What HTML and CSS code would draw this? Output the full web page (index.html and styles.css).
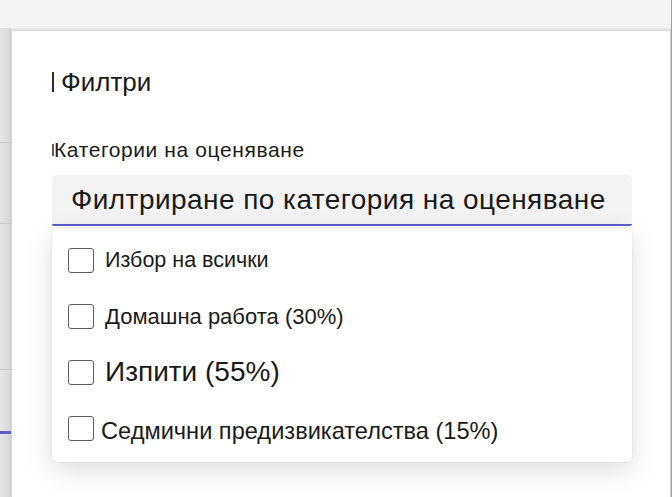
FILE: index.html
```html
<!DOCTYPE html>
<html lang="bg">
<head>
<meta charset="utf-8">
<title>Филтри</title>
<link rel="stylesheet" href="styles.css">
</head>
<body>
<div class="page">
  <div class="topbar"></div>
  <div class="workspace">
    <div class="backdrop">
      <div class="backdrop-row r1"></div>
      <div class="backdrop-row r2"></div>
      <div class="backdrop-row r3"></div>
      <div class="backdrop-row r4"></div>
      <div class="backdrop-row r5"></div>
    </div>
    <section class="panel">
      <h1 class="panel-title"><span class="caret"></span>Филтри</h1>
      <label class="field-label"><span class="caret small"></span>Категории на оценяване</label>
      <div class="combo">
        <span class="combo-text">Филтриране по категория на оценяване</span>
      </div>
      <ul class="listbox">
        <li class="option o1"><span class="check"></span><span class="option-text">Избор на всички</span></li>
        <li class="option o2"><span class="check"></span><span class="option-text">Домашна работа (30%)</span></li>
        <li class="option o3"><span class="check"></span><span class="option-text">Изпити (55%)</span></li>
        <li class="option o4"><span class="check"></span><span class="option-text">Седмични предизвикателства (15%)</span></li>
      </ul>
    </section>
    <div class="edge"></div>
  </div>
</div>
</body>
</html>
```
FILE: styles.css
```css
* { box-sizing: border-box; }

html, body {
  margin: 0;
  padding: 0;
  height: 100%;
}

body {
  font-family: "Liberation Sans", Arial, sans-serif;
  color: #1a1a1a;
  background: #f3f3f3;
  overflow: hidden;
}

.page {
  width: 672px;
  height: 497px;
  display: flex;
  flex-direction: column;
  border-right: 1px solid #5fb9b4;
}

.topbar {
  height: 28px;
  background: #f3f3f3;
  flex: none;
}

.workspace {
  flex: 1;
  display: flex;
  background: #e6e6e6;
}

/* dimmed page behind the panel */
.backdrop {
  width: 11px;
  flex: none;
  display: flex;
  flex-direction: column;
  background: linear-gradient(90deg, #e4e4e4 0%, #dcdcdc 70%, #d2d2d2 100%);
}
.backdrop-row { flex: none; }
.backdrop-row.r1 { height: 115px; border-bottom: 1px solid #c9c9c9; }
.backdrop-row.r2 { height: 81px; border-bottom: 1px solid #c9c9c9; }
.backdrop-row.r3 { height: 146px; border-bottom: 1px solid #c4c4c4; }
.backdrop-row.r4 { height: 64px; border-bottom: 3px solid #5b5fc7; }
.backdrop-row.r5 { flex: 1; }

.panel {
  flex: 1;
  margin-top: 2px;
  background: #ffffff;
  border-top: 1px solid #d4d4d4;
  border-left: 1px solid #d4d4d4;
  border-right: 1px solid #cfcfcf;
  padding: 36px 38px 0 40px;
}

.panel-title {
  margin: 0;
  font-weight: 400;
  font-size: 26px;
  line-height: 30px;
  display: flex;
  align-items: center;
}

.caret {
  display: inline-block;
  width: 2px;
  height: 20px;
  background: #3a2a1a;
  margin-right: 7px;
}
.caret.small {
  width: 2px;
  height: 12px;
  background: #6a5a4a;
  margin-right: 0;
}

.field-label {
  display: flex;
  align-items: center;
  margin-top: 41px;
  font-size: 21px;
  line-height: 24px;
  letter-spacing: 0.6px;
}

.combo {
  margin-top: 13px;
  height: 51px;
  background: #f3f3f3;
  border-radius: 5px 5px 2px 2px;
  border-bottom: 2px solid #5b5fc7;
  display: flex;
  align-items: center;
  padding-left: 19px;
}
.combo-text {
  font-size: 28px;
  line-height: 30px;
  letter-spacing: 0.45px;
  white-space: nowrap;
}

.listbox {
  list-style: none;
  margin: 2px 0 0 0;
  padding: 4px 16px 6px 16px;
  background: #ffffff;
  border-radius: 6px;
  box-shadow: 0 0 2px rgba(0, 0, 0, 0.12), 0 8px 28px rgba(0, 0, 0, 0.14);
}

.option {
  height: 56px;
  display: flex;
  align-items: center;
}

.check {
  width: 26px;
  height: 25px;
  flex: none;
  border: 1px solid #5c5c5c;
  border-radius: 3px;
  background: #ffffff;
}

.option-text {
  margin-left: 11px;
  white-space: nowrap;
}
.o1 .option-text { font-size: 21.5px; }
.o2 .option-text { font-size: 22px; padding-top: 2px; }
.o3 .option-text { font-size: 28px; }
.o4 .option-text { font-size: 23.6px; margin-left: 7px; padding-top: 6px; }
```
